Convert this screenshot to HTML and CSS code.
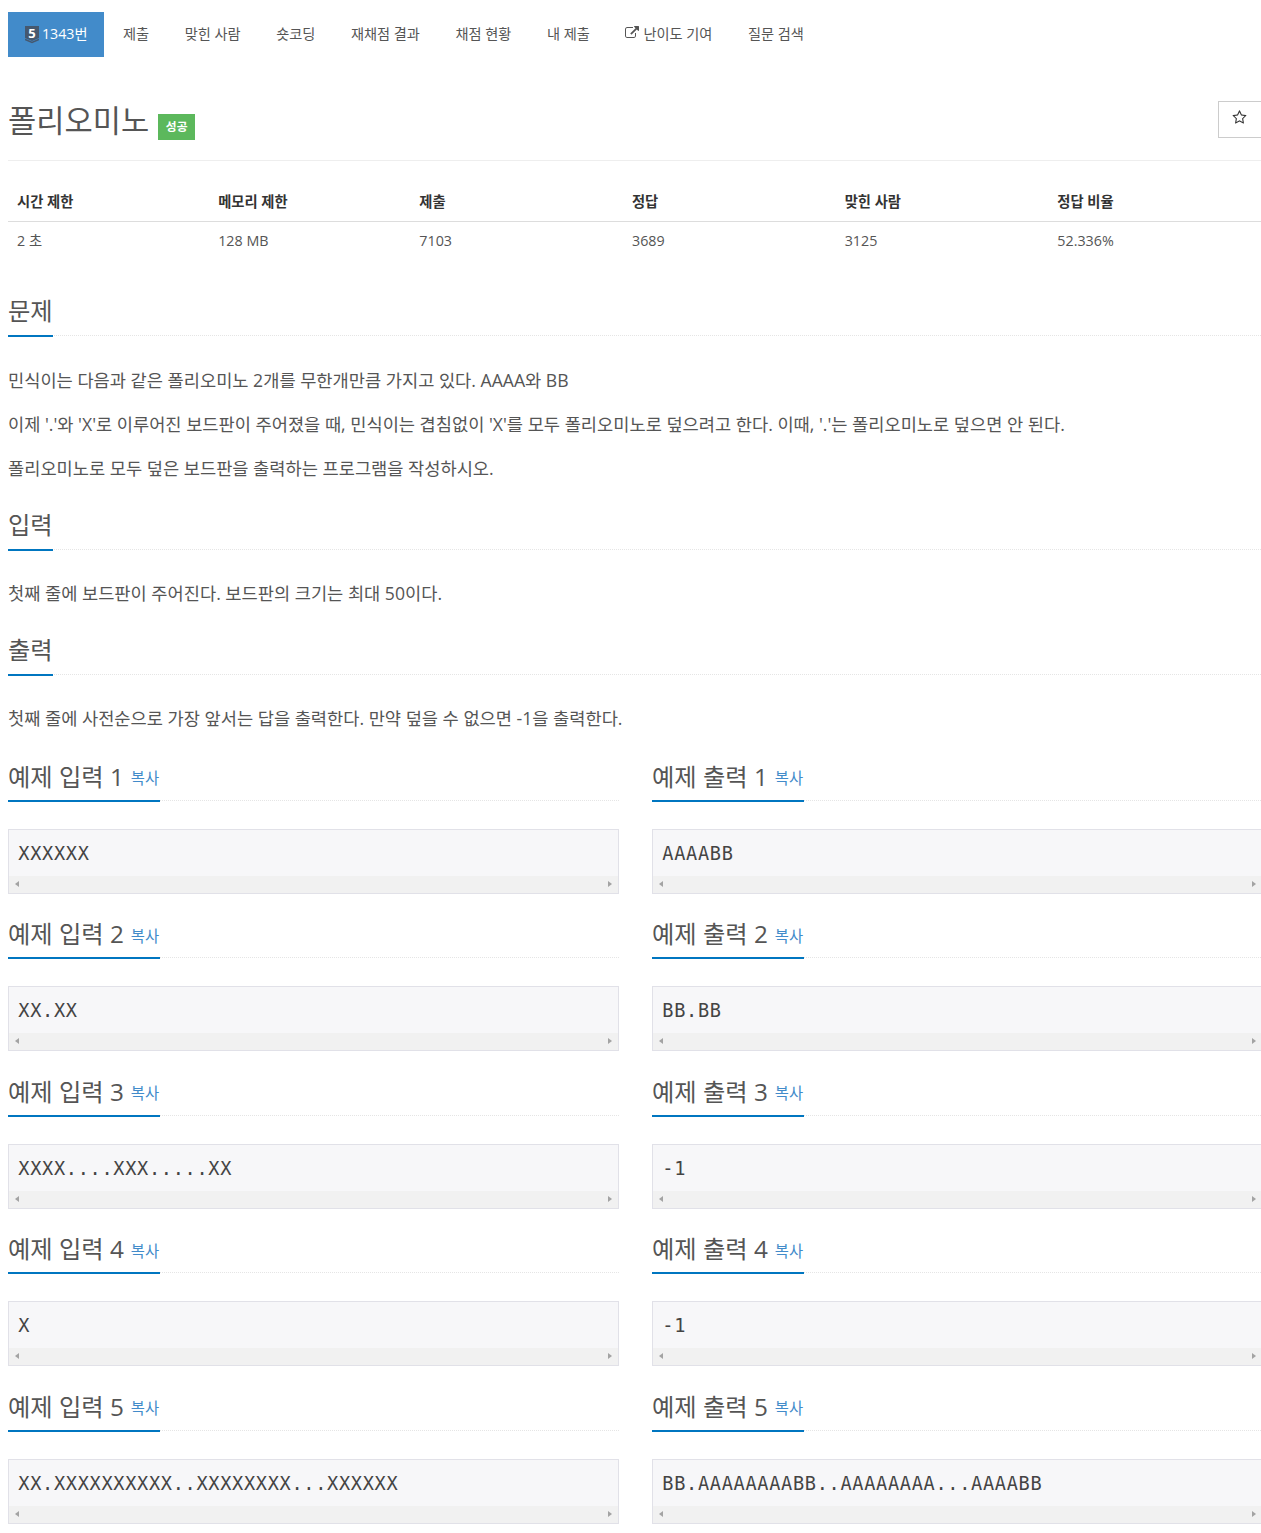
FILE: index.html
```html
<!DOCTYPE html>
<html lang="ko">
<head>
<meta charset="utf-8">
<title>1343번: 폴리오미노</title>
<link rel="stylesheet" href="styles.css">
</head>
<body>
<div class="page">
  <nav class="nav">
    <a class="nav-brand"><span class="tier"><svg viewBox="0 0 14 18" width="14" height="18"><path class="tier-body" d="M0 0h14v12l-7 3-7-3z"/><path class="tier-chev" d="M0 13.500l7 3 7-3" /></svg><span class="tier-num">5</span></span>1343번</a>
    <a class="nav-item">제출</a>
    <a class="nav-item">맞힌 사람</a>
    <a class="nav-item">숏코딩</a>
    <a class="nav-item">재채점 결과</a>
    <a class="nav-item">채점 현황</a>
    <a class="nav-item">내 제출</a>
    <a class="nav-item"><svg class="icon-ext" viewBox="0 0 1792 1792"><path d="M1408 928v320q0 119-84.500 203.500t-203.500 84.500h-832q-119 0-203.500-84.500t-84.500-203.500v-832q0-119 84.500-203.500t203.500-84.500h704q14 0 23 9t9 23v64q0 14-9 23t-23 9h-704q-66 0-113 47t-47 113v832q0 66 47 113t113 47h832q66 0 113-47t47-113v-320q0-14 9-23t23-9h64q14 0 23 9t9 23zm384-864v512q0 26-19 45t-45 19-45-19l-176-176-652 652q-10 10-23 10t-23-10l-114-114q-10-10-10-23t10-23l652-652-176-176q-19-19-19-45t19-45 45-19h512q26 0 45 19t19 45z"/></svg>난이도 기여</a>
    <a class="nav-item">질문 검색</a>
  </nav>

  <header class="title-row">
    <h1 class="title">폴리오미노<span class="badge">성공</span></h1>
    <button class="star-btn"><svg viewBox="0 0 1792 1792" width="15" height="15"><path d="M1201 1004l306-297-422-62-189-382-189 382-422 62 306 297-73 421 378-199 377 199zm527-357q0 22-26 48l-363 354 86 500q1 7 1 20 0 50-41 50-19 0-40-12l-449-236-449 236q-21 12-40 12-21 0-31.500-14.500t-10.500-35.500q0-6 2-20l86-500-364-354q-25-27-25-48 0-37 56-46l502-73 225-455q19-41 49-41t49 41l225 455 502 73q56 9 56 46z"/></svg></button>
  </header>

  <table class="info">
    <thead>
      <tr><th class="w16">시간 제한</th><th class="w16">메모리 제한</th><th class="w17">제출</th><th class="w17">정답</th><th class="w17">맞힌 사람</th><th class="w17">정답 비율</th></tr>
    </thead>
    <tbody>
      <tr><td>2 초</td><td>128 MB</td><td>7103</td><td>3689</td><td>3125</td><td>52.336%</td></tr>
    </tbody>
  </table>

  <section class="sec sec-problem">
    <div class="headline"><h2 class="hl-title">문제</h2></div>
    <div class="body">
      <p>민식이는 다음과 같은 폴리오미노 2개를 무한개만큼 가지고 있다. AAAA와 BB</p>
      <p>이제 '.'와 'X'로 이루어진 보드판이 주어졌을 때, 민식이는 겹침없이 'X'를 모두 폴리오미노로 덮으려고 한다. 이때, '.'는 폴리오미노로 덮으면 안 된다.</p>
      <p>폴리오미노로 모두 덮은 보드판을 출력하는 프로그램을 작성하시오.</p>
    </div>
  </section>
  <section class="sec">
    <div class="headline"><h2 class="hl-title">입력</h2></div>
    <div class="body"><p>첫째 줄에 보드판이 주어진다. 보드판의 크기는 최대 50이다.</p></div>
  </section>
  <section class="sec">
    <div class="headline"><h2 class="hl-title">출력</h2></div>
    <div class="body"><p>첫째 줄에 사전순으로 가장 앞서는 답을 출력한다. 만약 덮을 수 없으면 -1을 출력한다.</p></div>
  </section>

  <div class="samples">
    <div class="sample"><div class="headline"><h2 class="hl-title">예제 입력 1 <a class="copy">복사</a></h2></div><div class="box"><pre class="code">XXXXXX</pre><div class="sbar"><i class="arr-l"></i><i class="arr-r"></i></div></div></div>
    <div class="sample"><div class="headline"><h2 class="hl-title">예제 출력 1 <a class="copy">복사</a></h2></div><div class="box"><pre class="code">AAAABB</pre><div class="sbar"><i class="arr-l"></i><i class="arr-r"></i></div></div></div>
    <div class="sample"><div class="headline"><h2 class="hl-title">예제 입력 2 <a class="copy">복사</a></h2></div><div class="box"><pre class="code">XX.XX</pre><div class="sbar"><i class="arr-l"></i><i class="arr-r"></i></div></div></div>
    <div class="sample"><div class="headline"><h2 class="hl-title">예제 출력 2 <a class="copy">복사</a></h2></div><div class="box"><pre class="code">BB.BB</pre><div class="sbar"><i class="arr-l"></i><i class="arr-r"></i></div></div></div>
    <div class="sample"><div class="headline"><h2 class="hl-title">예제 입력 3 <a class="copy">복사</a></h2></div><div class="box"><pre class="code">XXXX....XXX.....XX</pre><div class="sbar"><i class="arr-l"></i><i class="arr-r"></i></div></div></div>
    <div class="sample"><div class="headline"><h2 class="hl-title">예제 출력 3 <a class="copy">복사</a></h2></div><div class="box"><pre class="code">-1</pre><div class="sbar"><i class="arr-l"></i><i class="arr-r"></i></div></div></div>
    <div class="sample"><div class="headline"><h2 class="hl-title">예제 입력 4 <a class="copy">복사</a></h2></div><div class="box"><pre class="code">X</pre><div class="sbar"><i class="arr-l"></i><i class="arr-r"></i></div></div></div>
    <div class="sample"><div class="headline"><h2 class="hl-title">예제 출력 4 <a class="copy">복사</a></h2></div><div class="box"><pre class="code">-1</pre><div class="sbar"><i class="arr-l"></i><i class="arr-r"></i></div></div></div>
    <div class="sample"><div class="headline"><h2 class="hl-title">예제 입력 5 <a class="copy">복사</a></h2></div><div class="box"><pre class="code">XX.XXXXXXXXXX..XXXXXXXX...XXXXXX</pre><div class="sbar"><i class="arr-l"></i><i class="arr-r"></i></div></div></div>
    <div class="sample"><div class="headline"><h2 class="hl-title">예제 출력 5 <a class="copy">복사</a></h2></div><div class="box"><pre class="code">BB.AAAAAAAABB..AAAAAAAA...AAAABB</pre><div class="sbar"><i class="arr-l"></i><i class="arr-r"></i></div></div></div>
  </div>
</div>
</body>
</html>
```
FILE: styles.css
```css
html, body { margin: 0; padding: 0; overflow: hidden; background: #fff; }
body {
  height: 1533px;
  font-family: "Open Sans", "Noto Sans CJK KR", sans-serif;
  color: #555;
}
.page { width: 1255px; padding: 12px 0 0 8px; }

/* nav */
.nav { display: flex; height: 45px; align-items: center; font-size: 14.200px; }
.nav-brand {
  display: flex; align-items: center; height: 45px; width: 96px;
  box-sizing: border-box; padding: 0 0 4px 17px;
  background: #428bca; color: #fff; font-size: 14.200px;
}
.tier { position: relative; display: inline-flex; width: 14px; height: 18px; margin: 4px 3px 0 0; }
.tier-body { fill: #45586f; }
.tier-chev { fill: none; stroke: #45586f; stroke-width: 1.500; }
.tier-num { position: absolute; left: 0; top: -2px; width: 14px; text-align: center; font-size: 13px; font-weight: 700; color: #fff; }
.nav-item { padding: 0 17.800px 4px; white-space: nowrap; display: flex; align-items: center; }
.nav-brand + .nav-item { margin-left: 1.200px; }
.icon-ext { width: 14px; height: 14px; fill: #555; margin-right: 4px; }

/* title */
.title-row {
  display: flex; justify-content: space-between; align-items: flex-start;
  height: 104px; box-sizing: border-box; border-bottom: 1px solid #eee;
  width: 1253px;
}
.title { margin: 41px 0 0; font-size: 30.700px; font-weight: 400; line-height: 44px; display: flex; align-items: center; }
.badge {
  display: inline-block; margin: 13px 0 0 9px; height: 26px; line-height: 25px; width: 37px; text-align: center;
  background: #5cb85c; color: #fff; font-size: 11.800px; font-weight: 700;
}
.star-btn {
  margin: 44px -4px 0 0; width: 47px; height: 37px; padding: 0 4px 5px 0;
  background: #fff; border: 1px solid #ccc; display: flex; align-items: center; justify-content: center;
}
.star-btn svg { fill: #333; }

/* table */
.info { width: 1253px; border-collapse: collapse; table-layout: fixed; margin-top: 20px; font-size: 14.300px; }
.w16 { width: 16%; }
.w17 { width: 17%; }
.info th { text-align: left; font-weight: 700; color: #333; padding: 11px 9px 9px; line-height: 20px; border-bottom: 1px solid #ddd; }
.info td { text-align: left; padding: 9px 9px; line-height: 20px; }

/* sections */
.sec-problem { margin-top: 28.300px; }
.headline { border-bottom: 1px dotted #e5e5e5; height: 47px; display: flex; box-sizing: content-box; }
.hl-title {
  margin: 0 0 -2px; font-size: 24.300px; font-weight: 400; line-height: 34px; height: 49px; box-sizing: border-box;
  border-bottom: 2px solid #0076c0; padding-top: 6px; white-space: nowrap;
}
.sample .hl-title { padding-top: 7px; }
.body { font-size: 17.620px; line-height: 24px; padding-top: 11px; margin-bottom: 22.500px; }
.sec-problem .body { padding-top: 12px; margin-bottom: 21.500px; }
.body p { margin: 20px 0 0; }

/* samples */
.samples { display: grid; grid-template-columns: 611px 611px; column-gap: 33px; margin-top: 17px; }
.sample { height: 157.500px; }
.copy { font-size: 15.400px; color: #428bca; margin-left: 0.500px; padding-right: 1px; vertical-align: 1.500px; }
.box {
  margin-top: 28px; border: 1px solid #e1e1e8; background: #f7f7f9; height: 64.800px; box-sizing: border-box;
  display: flex; flex-direction: column; justify-content: space-between;
}
.code {
  margin: 0; padding: 12px 9px 0 9.300px; font-family: "DejaVu Sans Mono", monospace; font-size: 18.600px; letter-spacing: 0.680px; line-height: 24px; color: #444;
}
.sbar { height: 17px; background: #f1f1f1; position: relative; }
.arr-l, .arr-r { position: absolute; top: 5px; width: 0; height: 0; border-top: 3.500px solid transparent; border-bottom: 3.500px solid transparent; }
.arr-l { left: 6px; border-right: 4px solid #a3a3a3; }
.arr-r { right: 6px; border-left: 4px solid #a3a3a3; }
```
